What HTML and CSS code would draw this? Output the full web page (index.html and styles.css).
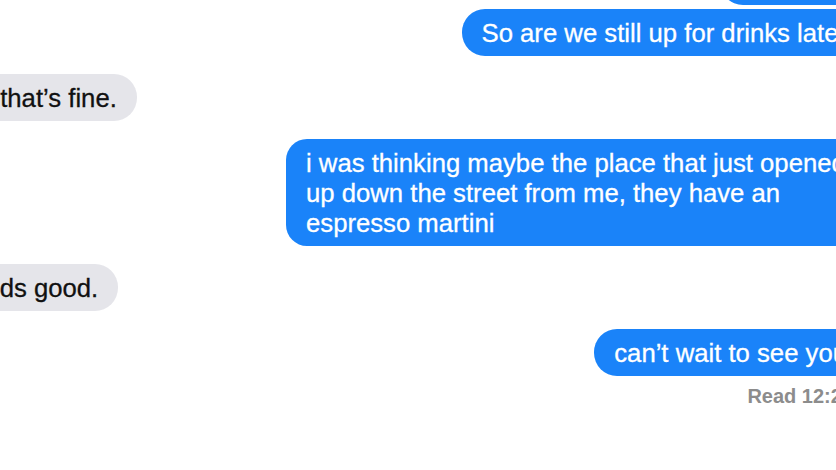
FILE: index.html
```html
<!DOCTYPE html>
<html lang="en">
<head>
<meta charset="utf-8">
<title>Messages</title>
<link rel="stylesheet" href="styles.css">
</head>
<body>
<main class="chat">
  <div class="msg sent">hey there</div>
  <div class="msg sent follow">So are we still up for drinks later</div>
  <div class="msg recv">Yes, that’s fine.</div>
  <div class="msg sent wide">i was thinking maybe the place that just opened up down the street from me, they have an espresso martini</div>
  <div class="msg recv">sounds good.</div>
  <div class="msg sent">can’t wait to see you</div>
  <div class="status">Read 12:25</div>
</main>
</body>
</html>
```

FILE: styles.css
```css
html, body {
  margin: 0;
  padding: 0;
  background: #ffffff;
  overflow: hidden;
  height: 470px;
}

.chat {
  display: flex;
  flex-direction: column;
  margin: -42px -31px 0 -76px;
  font-family: "Liberation Sans", Arial, Helvetica, sans-serif;
}

.msg {
  box-sizing: border-box;
  max-width: 581px;
  padding: 8.5px 20px;
  font-size: 25.7px;
  line-height: 30px;
  border-radius: 23px;
  margin-top: 18px;
  -webkit-text-stroke: 0.3px currentColor;
}

.msg:first-child {
  margin-top: 0;
}

.msg.follow {
  margin-top: 4px;
}

.sent {
  align-self: flex-end;
  background: #1a83f9;
  color: #ffffff;
}

.recv {
  align-self: flex-start;
  background: #e5e5ea;
  color: #111111;
}

.wide {
  border-radius: 21px;
}

.status {
  align-self: flex-end;
  margin-top: 8px;
  padding-right: 14px;
  font-size: 20px;
  line-height: 24px;
  font-weight: bold;
  color: #8c8c8c;
}
```
